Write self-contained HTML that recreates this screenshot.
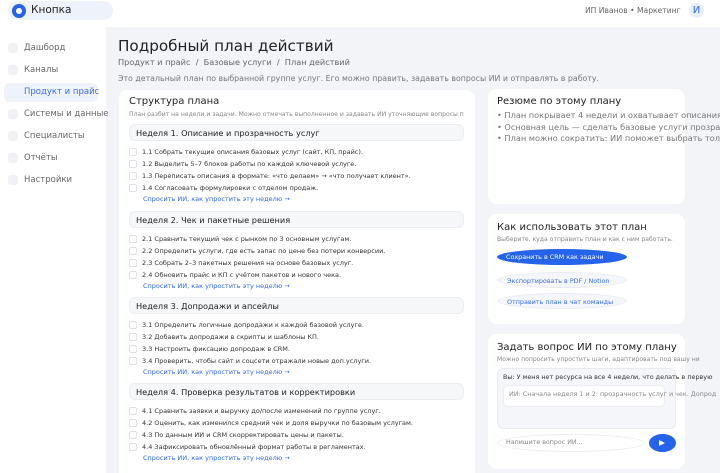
<!DOCTYPE html>
<html style="overflow:hidden;width:720px;height:473px"><head><meta charset="utf-8"><style>
*{box-sizing:border-box;margin:0;padding:0}
body{width:720px;height:473px;overflow:hidden;background:#f3f4f8;font-family:"DejaVu Sans","Liberation Sans",sans-serif;color:#222;position:relative}
.a{position:absolute;white-space:nowrap}
.top{left:0;top:0;width:720px;height:27px;background:#fff}
.side{left:0;top:27px;width:106px;height:446px;background:#fff}
.logo{left:8px;top:1px;width:105px;height:19px;background:#eef2fb;border-radius:10px}
.nav{font-size:8.5px;color:#666}
.nb{width:10px;height:10px;background:#f1f2f5;border-radius:3px}
.card{background:#fff;border-radius:9px}
.wk{left:129px;width:335px;height:17px;background:#f6f7f9;border:1px solid #eceef2;border-radius:6px;font-size:8.2px;padding:3px 6px;color:#222}
.cb{left:129px;width:8px;height:8px;border:1px solid #dfe1e6;border-radius:2px;background:#fff}
.t{left:142px;font-size:6.5px;color:#333}
.lk{left:143px;font-size:6.5px;color:#2f6ae0}
.rt{font-size:8.2px;color:#777}
.btn{border-radius:50%;font-size:6.4px;padding-top:4px;padding-left:9px}
</style></head><body>
<div class="a top"></div>
<div class="a side"></div>
<div class="a logo"></div>
<div class="a" style="left:12px;top:4px;width:14px;height:14px;border-radius:50%;background:#2563eb"></div>
<div class="a" style="left:16px;top:8px;width:6px;height:6px;border-radius:50%;background:#fff"></div>
<div class="a" style="left:31px;top:4px;font-size:10.5px;color:#222">Кнопка</div>
<div class="a" style="left:585px;top:6px;font-size:7.6px;color:#666">ИП Иванов • Маркетинг</div>
<div class="a" style="left:689px;top:3px;width:15px;height:15px;border-radius:50%;background:#e8eefc;color:#2f6ae0;font-size:10px;text-align:center;line-height:15px">И</div>

<div class="a nb" style="left:8px;top:43px"></div><div class="a nav" style="left:24px;top:43px">Дашборд</div>
<div class="a nb" style="left:8px;top:65px"></div><div class="a nav" style="left:24px;top:65px">Каналы</div>
<div class="a" style="left:4px;top:83px;width:94px;height:19px;background:#eef2fb;border-radius:6px"></div>
<div class="a nav" style="left:24px;top:87px;color:#3b6fe0">Продукт и прайс</div>
<div class="a nb" style="left:8px;top:109px"></div><div class="a nav" style="left:24px;top:109px">Системы и данные</div>
<div class="a nb" style="left:8px;top:131px"></div><div class="a nav" style="left:24px;top:131px">Специалисты</div>
<div class="a nb" style="left:8px;top:153px"></div><div class="a nav" style="left:24px;top:153px">Отчёты</div>
<div class="a nb" style="left:8px;top:175px"></div><div class="a nav" style="left:24px;top:175px">Настройки</div>

<div class="a" style="left:118px;top:37px;font-size:15.2px;color:#222">Подробный план действий</div>
<div class="a" style="left:118px;top:57px;font-size:8.2px;color:#666">Продукт и прайс &nbsp;/ &nbsp;Базовые услуги &nbsp;/ &nbsp;План действий</div>
<div class="a" style="left:118px;top:74px;font-size:7.85px;color:#777">Это детальный план по выбранной группе услуг. Его можно править, задавать вопросы ИИ и отправлять в работу.</div>

<div class="a card" style="left:119px;top:90px;width:356px;height:383px;border-radius:9px 9px 0 0"></div>
<div class="a" style="left:129px;top:96px;font-size:10px;color:#222">Структура плана</div>
<div class="a" style="left:129px;top:111px;font-size:6.1px;color:#888">План разбит на недели и задачи. Можно отмечать выполненное и задавать ИИ уточняющие вопросы п</div>

<div class="a wk" style="top:124px">Неделя 1. Описание и прозрачность услуг</div>
<div class="a cb" style="top:148px"></div><div class="a t" style="top:148px">1.1 Собрать текущие описания базовых услуг (сайт, КП, прайс).</div>
<div class="a cb" style="top:160px"></div><div class="a t" style="top:160px">1.2 Выделить 5–7 блоков работы по каждой ключевой услуге.</div>
<div class="a cb" style="top:172px"></div><div class="a t" style="top:172px">1.3 Переписать описания в формате: «что делаем» → «что получает клиент».</div>
<div class="a cb" style="top:184px"></div><div class="a t" style="top:184px">1.4 Согласовать формулировки с отделом продаж.</div>
<div class="a lk" style="top:195px">Спросить ИИ, как упростить эту неделю →</div>

<div class="a wk" style="top:211px">Неделя 2. Чек и пакетные решения</div>
<div class="a cb" style="top:235px"></div><div class="a t" style="top:235px">2.1 Сравнить текущий чек с рынком по 3 основным услугам.</div>
<div class="a cb" style="top:247px"></div><div class="a t" style="top:247px">2.2 Определить услуги, где есть запас по цене без потери конверсии.</div>
<div class="a cb" style="top:259px"></div><div class="a t" style="top:259px">2.3 Собрать 2–3 пакетных решения на основе базовых услуг.</div>
<div class="a cb" style="top:271px"></div><div class="a t" style="top:271px">2.4 Обновить прайс и КП с учётом пакетов и нового чека.</div>
<div class="a lk" style="top:282px">Спросить ИИ, как упростить эту неделю →</div>

<div class="a wk" style="top:297px">Неделя 3. Допродажи и апсейлы</div>
<div class="a cb" style="top:321px"></div><div class="a t" style="top:321px">3.1 Определить логичные допродажи к каждой базовой услуге.</div>
<div class="a cb" style="top:333px"></div><div class="a t" style="top:333px">3.2 Добавить допродажи в скрипты и шаблоны КП.</div>
<div class="a cb" style="top:345px"></div><div class="a t" style="top:345px">3.3 Настроить фиксацию допродаж в CRM.</div>
<div class="a cb" style="top:357px"></div><div class="a t" style="top:357px">3.4 Проверить, чтобы сайт и соцсети отражали новые доп.услуги.</div>
<div class="a lk" style="top:368px">Спросить ИИ, как упростить эту неделю →</div>

<div class="a wk" style="top:383px">Неделя 4. Проверка результатов и корректировки</div>
<div class="a cb" style="top:407px"></div><div class="a t" style="top:407px">4.1 Сравнить заявки и выручку до/после изменений по группе услуг.</div>
<div class="a cb" style="top:419px"></div><div class="a t" style="top:419px">4.2 Оценить, как изменился средний чек и доля выручки по базовым услугам.</div>
<div class="a cb" style="top:431px"></div><div class="a t" style="top:431px">4.3 По данным ИИ и CRM скорректировать цены и пакеты.</div>
<div class="a cb" style="top:443px"></div><div class="a t" style="top:443px">4.4 Зафиксировать обновлённый формат работы в регламентах.</div>
<div class="a lk" style="top:454px">Спросить ИИ, как упростить эту неделю →</div>

<div class="a card" style="left:488px;top:89px;width:197px;height:115px"></div>
<div class="a" style="left:497px;top:96px;font-size:10px;color:#222">Резюме по этому плану</div>
<div class="a rt" style="left:497px;top:110px">• План покрывает 4 недели и охватывает описания,</div>
<div class="a rt" style="left:497px;top:122px">• Основная цель — сделать базовые услуги прозрач</div>
<div class="a rt" style="left:497px;top:133px">• План можно сократить: ИИ поможет выбрать толь</div>

<div class="a card" style="left:488px;top:214px;width:197px;height:110px"></div>
<div class="a" style="left:497px;top:222px;font-size:10px;color:#222">Как использовать этот план</div>
<div class="a" style="left:497px;top:236px;font-size:6.1px;color:#888">Выберите, куда отправить план и как с ним работать.</div>
<div class="a btn" style="left:497px;top:249px;width:130px;height:16px;background:#2563eb;color:#fff">Сохранить в CRM как задачи</div>
<div class="a btn" style="left:497px;top:272px;width:130px;height:16px;background:#f4f6fa;border:1px solid #e8ebf1;color:#3b6fe0">Экспортировать в PDF / Notion</div>
<div class="a btn" style="left:497px;top:293px;width:130px;height:16px;background:#f4f6fa;border:1px solid #e8ebf1;color:#3b6fe0">Отправить план в чат команды</div>

<div class="a card" style="left:488px;top:334px;width:197px;height:135px"></div>
<div class="a" style="left:497px;top:342px;font-size:10px;color:#222">Задать вопрос ИИ по этому плану</div>
<div class="a" style="left:497px;top:356px;font-size:6.1px;color:#888">Можно попросить упростить шаги, адаптировать под вашу ни</div>
<div class="a" style="left:497px;top:368px;width:179px;height:61px;background:#f5f6f9;border:1px solid #e8eaef;border-radius:6px"></div>
<div class="a" style="left:503px;top:373px;font-size:6.4px;color:#333">Вы: У меня нет ресурса на все 4 недели, что делать в первую</div>
<div class="a" style="left:503px;top:385px;width:162px;height:22px;background:#fff;border:1px solid #eceef2;border-radius:5px"></div>
<div class="a" style="left:509px;top:390px;font-size:6.4px;color:#888">ИИ: Сначала неделя 1 и 2: прозрачность услуг и чек. Допрод</div>
<div class="a" style="left:497px;top:434px;width:148px;height:18px;border-radius:50%;border:1px solid #eceef2;background:#fff"></div>
<div class="a" style="left:506px;top:439px;font-size:6.3px;color:#888">Напишите вопрос ИИ...</div>
<div class="a" style="left:649px;top:434px;width:27px;height:18px;border-radius:50%;background:#2563eb"></div>
<svg class="a" style="left:658px;top:439px" width="8" height="8" viewBox="0 0 8 8"><path d="M1 1 L7 4 L1 7 Z" fill="#fff"/></svg>
</body></html>
